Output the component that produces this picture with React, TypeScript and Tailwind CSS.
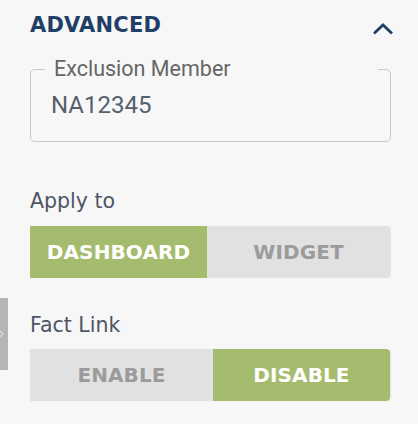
import { useState } from "react";

const poppinsLike = { fontFamily: "'DejaVu Sans', Verdana, sans-serif" };
const roboto = { fontFamily: "Roboto, 'Liberation Sans', sans-serif" };

function Segmented({
  options,
  value,
  onChange,
  split,
}: {
  options: string[];
  value: string;
  onChange: (v: string) => void;
  split: string;
}) {
  return (
    <div className="flex h-[52px] w-[360px] overflow-hidden rounded-r-[4px] shadow-[1px_0_1px_rgba(0,0,0,0.08)]">
      {options.map((opt, i) => {
        const active = opt === value;
        return (
          <button
            key={opt}
            onClick={() => onChange(opt)}
            style={poppinsLike}
            className={
              (i === 0 ? split : "flex-1") +
              " flex items-center justify-center text-[20px] font-bold tracking-[0.1px] " +
              (active ? "bg-[#a5bc6e] text-white" : "bg-[#e1e1e1] text-[#9b9b9b]")
            }
          >
            {opt}
          </button>
        );
      })}
    </div>
  );
}

export default function App() {
  const [applyTo, setApplyTo] = useState("DASHBOARD");
  const [factLink, setFactLink] = useState("DISABLE");
  const [member, setMember] = useState("NA12345");

  return (
    <div className="relative h-[424px] w-[418px] bg-[#f7f7f7] pl-[30px] pr-[29px] pt-[10px]" style={poppinsLike}>
      {/* side drawer handle */}
      <div className="absolute left-0 top-[298px] flex h-[72px] w-[8px] items-center bg-[#b5b5b5]">
        <svg width="8" height="12" viewBox="0 0 8 12">
          <path d="M-1 2 L3 6 L-1 10" fill="none" stroke="#d4d4d4" strokeWidth="1.6" />
        </svg>
      </div>

      <div className="flex h-[32px] items-center justify-between">
        <h2 className="text-[21px] font-bold tracking-[0.2px] text-[#1f3f66]">ADVANCED</h2>
        <svg width="24" height="14" viewBox="0 0 24 14" className="mr-[-6px] mt-[5px]">
          <path d="M3 11.5 L12 3 L21 11.5" fill="none" stroke="#1f3f66" strokeWidth="2.8" />
        </svg>
      </div>

      <fieldset className="mt-[17px] h-[83px] rounded-[5px] border border-[#c9c9c9] pl-[20px] pr-[12px] pb-0">
        <legend
          className="ml-[-6px] w-[333px] pl-[9px] text-[21.5px] leading-[20px] text-[#666666]"
          style={roboto}
        >
          Exclusion Member
        </legend>
        <input
          value={member}
          onChange={(e) => setMember(e.target.value)}
          className="mt-[11px] w-full bg-transparent text-[24px] leading-[30px] text-[#555f6e] outline-none"
          style={roboto}
        />
      </fieldset>

      <div className="mt-[48px] text-[20.5px] leading-[22px] text-[#4d5566]">Apply to</div>
      <div className="mt-[14px]">
        <Segmented options={["DASHBOARD", "WIDGET"]} value={applyTo} onChange={setApplyTo} split="w-[177px]" />
      </div>

      <div className="mt-[36px] text-[20.5px] leading-[22px] text-[#4d5566]">Fact Link</div>
      <div className="mt-[13px]">
        <Segmented options={["ENABLE", "DISABLE"]} value={factLink} onChange={setFactLink} split="w-[183px]" />
      </div>
    </div>
  );
}
